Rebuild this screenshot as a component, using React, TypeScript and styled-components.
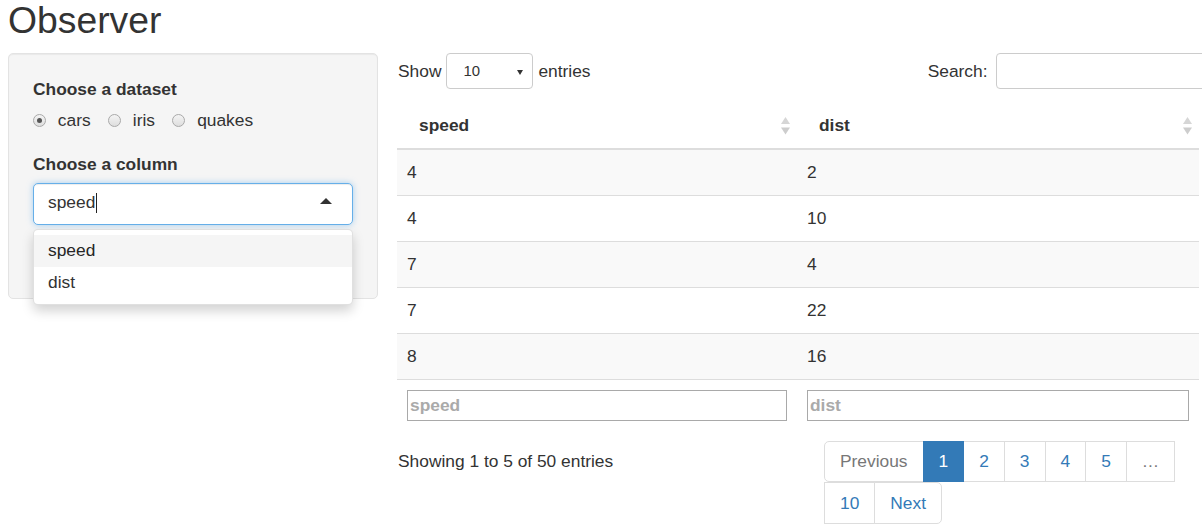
import React from "react";
import styled, { createGlobalStyle, css } from "styled-components";

const GlobalStyle = createGlobalStyle`
  html, body {
    margin: 0;
    padding: 0;
    width: 1202px;
    height: 528px;
    overflow: hidden;
    background: #fff;
  }
  body {
    font-family: "Liberation Sans", Arial, Helvetica, sans-serif;
    font-size: 17.36px;
    line-height: 25px;
    color: #333;
  }
  * { box-sizing: border-box; }
`;

const Page = styled.div`
  padding-left: 8px;
`;

const Title = styled.h2`
  margin: 0 0 12px;
  font-size: 37.3px;
  line-height: 41px;
  font-weight: normal;
  color: #333;
`;

const Layout = styled.div`
  display: grid;
  grid-template-columns: 370px 802px;
  column-gap: 19px;
  align-items: start;
`;

/* ---------- sidebar ---------- */

const Well = styled.div`
  background: #f5f5f5;
  border: 1px solid #e3e3e3;
  border-radius: 5px;
  box-shadow: inset 0 1px 1px rgba(0, 0, 0, 0.05);
  padding: 23px 24px 73px 24px;
`;

const FormGroup = styled.div<{ $last?: boolean }>`
  margin-bottom: ${(p) => (p.$last ? "0" : "18.6px")};
`;

const Label = styled.div`
  font-weight: bold;
  margin-bottom: 6px;
`;

const RadioRow = styled.div`
  display: flex;
  align-items: center;
  gap: 17.4px;
  height: 25px;
`;

const RadioOption = styled.label`
  display: inline-flex;
  align-items: center;
  gap: 11.8px;
`;

const RadioCircle = styled.span<{ $checked?: boolean }>`
  width: 13px;
  height: 13px;
  border-radius: 50%;
  border: 1px solid #a9a9a9;
  background: linear-gradient(#f4f4f4, #dedede);
  display: inline-flex;
  align-items: center;
  justify-content: center;
  ${(p) =>
    p.$checked &&
    css`
      &::after {
        content: "";
        width: 5px;
        height: 5px;
        border-radius: 50%;
        background: #555;
      }
    `}
`;

const SelectWrap = styled.div`
  position: relative;
`;

const SelectBox = styled.div`
  height: 42px;
  border: 1px solid #66afe9;
  border-radius: 5px;
  background: #fff;
  box-shadow: inset 0 1px 1px rgba(0, 0, 0, 0.075), 0 0 6px rgba(102, 175, 233, 0.55);
  padding: 0 14px 2px 14px;
  display: flex;
  align-items: center;
  justify-content: space-between;
`;

const SelectValue = styled.span`
  display: inline-flex;
  align-items: center;
`;

const TextCursor = styled.span`
  display: inline-block;
  width: 1px;
  height: 20px;
  background: #222;
  margin-left: 1px;
`;

const CaretUp = styled.span`
  width: 0;
  height: 0;
  border-left: 6px solid transparent;
  border-right: 6px solid transparent;
  border-bottom: 6px solid #333;
  margin-right: 6px;
  margin-bottom: 3px;
`;

const Dropdown = styled.div`
  position: absolute;
  top: calc(100% + 4px);
  left: 0;
  right: 0;
  z-index: 10;
  background: #fff;
  border: 1px solid rgba(0, 0, 0, 0.12);
  border-radius: 5px;
  box-shadow: 0 6px 12px rgba(0, 0, 0, 0.175);
  padding: 5px 0;
`;

const Option = styled.div<{ $active?: boolean }>`
  height: 32px;
  padding: 0 14px;
  display: flex;
  align-items: center;
  color: ${(p) => (p.$active ? "#262626" : "#333")};
  background: ${(p) => (p.$active ? "#f5f5f5" : "transparent")};
`;

/* ---------- main ---------- */

const Main = styled.div``;

const Controls = styled.div`
  display: flex;
  justify-content: space-between;
  align-items: center;
  height: 36px;
  margin-right: -12px;
`;

const InlineLabel = styled.label<{ $gap: string }>`
  display: inline-flex;
  align-items: center;
  gap: ${(p) => p.$gap};
  padding-left: 1px;
`;

const LengthSelect = styled.div`
  width: 87px;
  height: 36px;
  border: 1px solid #ccc;
  border-radius: 4px;
  background: #fff;
  font-size: 14.9px;
  display: flex;
  align-items: center;
  justify-content: space-between;
  padding: 0 9px 0 16px;
`;

const SmallArrow = styled.span`
  width: 0;
  height: 0;
  border-left: 3.5px solid transparent;
  border-right: 3.5px solid transparent;
  border-top: 5px solid #333;
  margin-top: 2px;
`;

const SearchInput = styled.input`
  width: 215px;
  height: 36px;
  border: 1px solid #ccc;
  border-radius: 4px;
  font: inherit;
  padding: 0 10px;
  outline: none;
`;

const Table = styled.table`
  width: 802px;
  margin-top: 14px;
  border-collapse: collapse;
  table-layout: fixed;
`;

const Th = styled.th`
  position: relative;
  text-align: left;
  font-weight: bold;
  padding: 10px 22px;
  border-bottom: 2px solid #ddd;
`;

const SortIcon = styled.svg`
  position: absolute;
  right: 7px;
  top: 50%;
  margin-top: -9px;
`;

const Tr = styled.tr<{ $striped?: boolean }>`
  background: ${(p) => (p.$striped ? "#f9f9f9" : "#fff")};
`;

const Td = styled.td<{ $first?: boolean }>`
  padding: 10px;
  border-top: ${(p) => (p.$first ? "none" : "1px solid #ddd")};
`;

const FootTd = styled.td`
  padding: 10px;
  border-top: 1px solid #ddd;
`;

const FilterInput = styled.input`
  display: block;
  width: 100%;
  height: 31px;
  border: 1px solid #a9a9a9;
  padding: 0 2px;
  font-family: inherit;
  font-size: 17.36px;
  font-weight: bold;
  outline: none;
  &::placeholder {
    color: #aaa;
    opacity: 1;
  }
`;

const BottomRow = styled.div`
  display: flex;
  justify-content: space-between;
  align-items: flex-start;
  margin-top: 7.5px;
`;

const Info = styled.div`
  padding-top: 10px;
  padding-left: 1px;
`;

const PagerWrap = styled.div`
  padding-right: 22px;
`;

const Pager = styled.ul`
  display: flex;
  flex-wrap: wrap;
  width: 353px;
  margin: 2.5px 0 0;
  padding: 0 0 0 1px;
  list-style: none;
`;

type Kind = "active" | "disabled" | "normal";

const PageLink = styled.li<{ $kind: Kind; $radius?: string }>`
  margin-left: -1px;
  padding: 7.2px 15px;
  line-height: 25px;
  border: 1px solid ${(p) => (p.$kind === "active" ? "#337ab7" : "#ddd")};
  background: ${(p) => (p.$kind === "active" ? "#337ab7" : "#fff")};
  color: ${(p) =>
    p.$kind === "active" ? "#fff" : p.$kind === "disabled" ? "#777" : "#337ab7"};
  border-radius: ${(p) => p.$radius || "0"};
  position: relative;
  z-index: ${(p) => (p.$kind === "active" ? 2 : 1)};
`;

const SortBoth = () => (
  <SortIcon width="9" height="18" viewBox="0 0 9 18">
    <polygon points="4.5,0 9,7 0,7" fill="#d6d6d6" />
    <polygon points="0,10.5 9,10.5 4.5,17.5" fill="#cdcdcd" />
  </SortIcon>
);

const rows = [
  [4, 2],
  [4, 10],
  [7, 4],
  [7, 22],
  [8, 16],
];

const pages: { label: string; kind: Kind; radius?: string }[] = [
  { label: "Previous", kind: "disabled", radius: "5px 0 0 5px" },
  { label: "1", kind: "active" },
  { label: "2", kind: "normal" },
  { label: "3", kind: "normal" },
  { label: "4", kind: "normal" },
  { label: "5", kind: "normal" },
  { label: "…", kind: "disabled" },
  { label: "10", kind: "normal" },
  { label: "Next", kind: "normal", radius: "0 5px 5px 0" },
];

export default function App() {
  return (
    <Page>
      <GlobalStyle />
      <Title>Observer</Title>
      <Layout>
        <Well>
          <FormGroup>
            <Label>Choose a dataset</Label>
            <RadioRow>
              <RadioOption>
                <RadioCircle $checked />
                cars
              </RadioOption>
              <RadioOption>
                <RadioCircle />
                iris
              </RadioOption>
              <RadioOption>
                <RadioCircle />
                quakes
              </RadioOption>
            </RadioRow>
          </FormGroup>
          <FormGroup $last>
            <Label>Choose a column</Label>
            <SelectWrap>
              <SelectBox>
                <SelectValue>
                  speed
                  <TextCursor />
                </SelectValue>
                <CaretUp />
              </SelectBox>
              <Dropdown>
                <Option $active>speed</Option>
                <Option>dist</Option>
              </Dropdown>
            </SelectWrap>
          </FormGroup>
        </Well>

        <Main>
          <Controls>
            <InlineLabel $gap="5px">
              Show
              <LengthSelect>
                <span>10</span>
                <SmallArrow />
              </LengthSelect>
              entries
            </InlineLabel>
            <InlineLabel $gap="8.5px">
              Search:
              <SearchInput type="search" />
            </InlineLabel>
          </Controls>

          <Table>
            <colgroup>
              <col style={{ width: 400 }} />
              <col />
            </colgroup>
            <thead>
              <tr>
                <Th>
                  speed
                  <SortBoth />
                </Th>
                <Th>
                  dist
                  <SortBoth />
                </Th>
              </tr>
            </thead>
            <tbody>
              {rows.map((r, i) => (
                <Tr key={i} $striped={i % 2 === 0}>
                  <Td $first={i === 0}>{r[0]}</Td>
                  <Td $first={i === 0}>{r[1]}</Td>
                </Tr>
              ))}
            </tbody>
            <tfoot>
              <tr>
                <FootTd>
                  <FilterInput placeholder="speed" />
                </FootTd>
                <FootTd>
                  <FilterInput placeholder="dist" />
                </FootTd>
              </tr>
            </tfoot>
          </Table>

          <BottomRow>
            <Info>Showing 1 to 5 of 50 entries</Info>
            <PagerWrap>
              <Pager>
                {pages.map((p) => (
                  <PageLink key={p.label} $kind={p.kind} $radius={p.radius}>
                    {p.label}
                  </PageLink>
                ))}
              </Pager>
            </PagerWrap>
          </BottomRow>
        </Main>
      </Layout>
    </Page>
  );
}
